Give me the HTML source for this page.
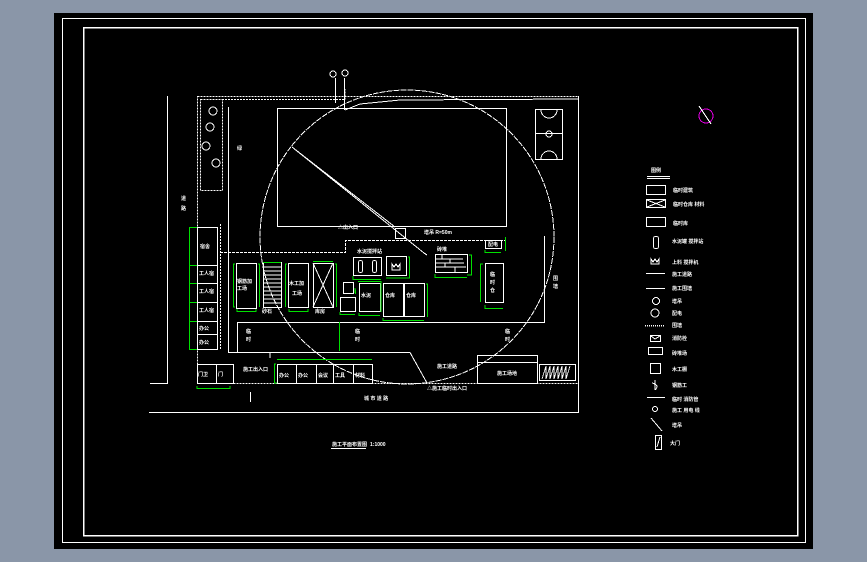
<!DOCTYPE html>
<html><head><meta charset="utf-8"><style>
html,body{margin:0;padding:0;background:#8a96a8;width:867px;height:562px;overflow:hidden}
svg{display:block}
text{font-family:"Liberation Sans","Noto Sans CJK SC",sans-serif;fill:#fff;font-size:5px;font-weight:bold}
</style></head><body>
<svg width="867" height="562" viewBox="0 0 867 562" xmlns="http://www.w3.org/2000/svg" shape-rendering="crispEdges">
<rect x="0" y="0" width="867" height="562" fill="#8a96a8"/>
<rect x="54" y="13" width="759" height="536" fill="#000"/>
<g fill="none" stroke="#fff" stroke-width="1">
<rect x="62.5" y="18.5" width="743" height="524"/>
<rect x="83.5" y="27.5" width="714" height="508" stroke-width="1.5"/>
<polyline points="167.5,96 167.5,383.5 150,383.5"/>
<line x1="149" y1="412.5" x2="579" y2="412.5" stroke-width="1.3"/>
<rect x="197.5" y="96.5" width="381" height="287" stroke-dasharray="2,1"/>
<rect x="200.5" y="99.5" width="22" height="91" stroke-dasharray="2,1"/>
<polyline points="222,99.5 345,99.5 345,89" stroke-dasharray="2,1"/>
<line x1="335.5" y1="78" x2="335.5" y2="103"/>
<line x1="344.5" y1="78" x2="344.5" y2="110"/>
<circle cx="333" cy="74" r="3"/><circle cx="345" cy="73" r="3"/>
<polyline points="345,110 360,104 400,100 578,99"/>
<polyline points="228.5,107 228.5,352.5 410,352.5 427,383"/>
<polyline points="237.5,352 237.5,322.5 544.5,322.5 544.5,236"/>
<polyline points="220,252.5 345.5,252.5 345.5,240.5 505,240.5" stroke-dasharray="3,1"/>
<line x1="220.5" y1="224" x2="220.5" y2="350" stroke-dasharray="2,1"/>
<circle cx="407" cy="237" r="147" stroke-dasharray="6,1"/>
<rect x="277.5" y="108.5" width="229" height="118"/>
<polyline points="292,147 424,253 427,255"/>
<polyline points="292,147 395,227"/>
<rect x="395.5" y="228.5" width="10" height="10"/>
<rect x="535.5" y="109.5" width="27" height="50"/>
<line x1="535" y1="133.5" x2="562" y2="133.5"/><circle cx="549" cy="134" r="3"/>
<path d="M541,110 A8,8 0 0 0 557,110 M541,159 A8,8 0 0 1 557,159"/>
<circle cx="213" cy="111" r="4"/><circle cx="210" cy="127" r="4"/><circle cx="206" cy="146" r="4"/><circle cx="216" cy="163" r="4"/>
<rect x="197.5" y="227.5" width="20" height="122"/>
<line x1="197" y1="265.5" x2="217" y2="265.5"/><line x1="197" y1="283.5" x2="217" y2="283.5"/><line x1="197" y1="302.5" x2="217" y2="302.5"/><line x1="197" y1="321.5" x2="217" y2="321.5"/><line x1="197" y1="334.5" x2="217" y2="334.5"/>
<rect x="197.5" y="364.5" width="36" height="19"/><line x1="216.5" y1="364" x2="216.5" y2="383"/>
<rect x="236.5" y="263.5" width="20" height="45"/>
<rect x="263.5" y="262.5" width="18" height="45"/>
<g stroke-width="0.8"><line x1="263" y1="267" x2="281" y2="267"/><line x1="263" y1="271" x2="281" y2="271"/><line x1="263" y1="275" x2="281" y2="275"/><line x1="263" y1="279" x2="281" y2="279"/><line x1="263" y1="283" x2="281" y2="283"/><line x1="263" y1="287" x2="281" y2="287"/><line x1="263" y1="291" x2="281" y2="291"/><line x1="263" y1="295" x2="281" y2="295"/><line x1="263" y1="299" x2="281" y2="299"/><line x1="263" y1="303" x2="281" y2="303"/></g>
<rect x="288.5" y="263.5" width="20" height="44"/>
<rect x="313.5" y="263.5" width="20" height="44"/><path d="M313,263 L333,307 M333,263 L313,307"/>
<rect x="343.5" y="282.5" width="10" height="11"/><rect x="340.5" y="297.5" width="15" height="14"/>
<rect x="359.5" y="283.5" width="21" height="28"/>
<rect x="383.5" y="283.5" width="20" height="33"/><rect x="404.5" y="283.5" width="20" height="33"/>
<rect x="353.5" y="257.5" width="28" height="18"/><rect x="358.5" y="260.5" width="4" height="12" rx="2"/><rect x="372.5" y="260.5" width="4" height="12" rx="2"/>
<rect x="386.5" y="256.5" width="20" height="19"/><path d="M392,270 L392,264 394,267 396,264 398,267 400,264 400,270 Z"/>
<rect x="435.5" y="254.5" width="32" height="18"/>
<g stroke-width="0.7"><line x1="435" y1="259" x2="463" y2="259"/><line x1="435" y1="263" x2="464" y2="263"/><line x1="435" y1="267" x2="466" y2="267"/><line x1="442" y1="254" x2="442" y2="259"/><line x1="450" y1="259" x2="450" y2="263"/><line x1="445" y1="263" x2="445" y2="267"/><line x1="455" y1="267" x2="455" y2="272"/></g>
<rect x="485.5" y="240.5" width="16" height="8"/>
<rect x="485.5" y="263.5" width="18" height="39"/>
<rect x="277.5" y="364.5" width="95" height="19"/>
<line x1="296.5" y1="364" x2="296.5" y2="383"/><line x1="316.5" y1="364" x2="316.5" y2="383"/><line x1="333.5" y1="364" x2="333.5" y2="383"/><line x1="353.5" y1="364" x2="353.5" y2="383"/>
<line x1="270" y1="352" x2="270" y2="358"/>
<line x1="250.5" y1="392" x2="250.5" y2="402"/>
<rect x="477.5" y="355.5" width="60" height="28"/><line x1="477" y1="362.5" x2="537" y2="362.5"/>
<rect x="539.5" y="364.5" width="36" height="16"/>
<path d="M542,379 L546,366 546,379 550,366 550,379 554,366 554,379 558,366 558,379 562,366 562,379 566,366 566,379 570,366" stroke-width="0.8"/>
<line x1="578.5" y1="96" x2="578.5" y2="412"/>
<line x1="647" y1="176.5" x2="670" y2="176.5"/><line x1="647" y1="178.5" x2="670" y2="178.5"/>
<rect x="646.5" y="185.5" width="19" height="9"/>
<rect x="646.5" y="199.5" width="19" height="8"/><path d="M647,200 L665,207 M665,200 L647,207"/>
<rect x="646.5" y="217.5" width="19" height="9"/>
<rect x="653.5" y="236.5" width="5" height="12" rx="2"/>
<path d="M651,264 L651,259 653,262 655,259 657,262 659,259 659,264 Z"/>
<line x1="646" y1="273.5" x2="665" y2="273.5"/>
<line x1="646" y1="288.5" x2="665" y2="288.5"/>
<circle cx="656" cy="301" r="3.5"/>
<circle cx="655" cy="313" r="4"/>
<line x1="645" y1="325.5" x2="664" y2="325.5" stroke-dasharray="1,1" stroke-width="1.5"/>
<rect x="650.5" y="335.5" width="10" height="6"/><path d="M651,336 L655,339 660,336"/>
<rect x="648.5" y="347.5" width="14" height="7"/>
<rect x="650.5" y="363.5" width="10" height="10"/>
<path d="M655,380 L655,390 M652,383 Q660,385 655,390"/>
<line x1="647" y1="397.5" x2="665" y2="397.5"/>
<circle cx="655" cy="409" r="2.5"/>
<line x1="651" y1="418" x2="662" y2="431"/>
<rect x="655.5" y="435.5" width="6" height="14"/><line x1="657" y1="447" x2="660" y2="437"/>
<line x1="331" y1="448.5" x2="366" y2="448.5"/>
</g>
<g fill="none" stroke="#00e000" stroke-width="1.3">
<line x1="189.5" y1="227" x2="189.5" y2="349"/><line x1="189" y1="227.5" x2="197" y2="227.5"/>
<line x1="189" y1="265.5" x2="197" y2="265.5"/><line x1="189" y1="283.5" x2="197" y2="283.5"/><line x1="189" y1="302.5" x2="197" y2="302.5"/><line x1="189" y1="321.5" x2="197" y2="321.5"/><line x1="189" y1="349.5" x2="197" y2="349.5"/>
<polyline points="197,386 197,388.5 230,388.5 230,386"/>
<polyline points="235,264 233.5,264 233.5,307 235,307"/><polyline points="258,264 259.5,264 259.5,307"/>
<polyline points="237,309 237,311.5 256,311.5 256,309"/>
<line x1="263" y1="262.5" x2="281" y2="262.5"/>
<polyline points="287,264 285.5,264 285.5,307"/><polyline points="289,309 289,311.5 308,311.5 308,309"/>
<line x1="313" y1="261.5" x2="333" y2="261.5"/><polyline points="335,264 336.5,264 336.5,307"/>
<polyline points="353,276 353,279.5 381,279.5"/><polyline points="408,257 409.5,257 409.5,278 386,278"/>
<polyline points="355,288 355.5,294"/><polyline points="340,312 340,314.5 355,314.5"/>
<polyline points="359,313 359,315.5 380,315.5"/><polyline points="358,281.5 381,281.5 381,312"/>
<polyline points="383,318 383,320.5 424,320.5"/><polyline points="426,284 427.5,284 427.5,317"/>
<polyline points="435,274 435,277.5 467,277.5"/><polyline points="469,255 471.5,255 471.5,275 467,275"/>
<polyline points="485,250 485,252.5 501,252.5"/><line x1="505.5" y1="237" x2="505.5" y2="251"/>
<polyline points="483,264 480.5,264 480.5,302"/><polyline points="485,305 485,308.5 503,308.5"/>
<line x1="339.5" y1="322" x2="339.5" y2="351"/>
<polyline points="276,364 274.5,364 274.5,383 277,383"/><line x1="277" y1="359.5" x2="372" y2="359.5"/>
</g>
<circle cx="706" cy="116" r="7" fill="none" stroke="#e000e0" stroke-width="1"/>
<line x1="699" y1="106" x2="711" y2="124" stroke="#fff" stroke-width="1"/>
<g>
<text x="200" y="248">宿舍</text><text x="199" y="275">工人宿</text><text x="199" y="293">工人宿</text><text x="199" y="312">工人宿</text><text x="199" y="330">办公</text><text x="199" y="344">办公</text>
<text x="198" y="376">门卫</text><text x="218" y="376">门</text>
<text x="237" y="283">钢筋加</text><text x="237" y="290">工场</text>
<text x="289" y="285">木工加</text><text x="292" y="295">工场</text>
<text x="262" y="313">砂石</text><text x="315" y="313">库房</text>
<text x="361" y="297">水泥</text><text x="385" y="297">仓库</text><text x="406" y="297">仓库</text>
<text x="357" y="253">水泥搅拌站</text><text x="437" y="251">砖堆</text><text x="488" y="246">配电</text>
<text x="490" y="276" font-size="6">临</text><text x="490" y="284" font-size="6">时</text><text x="490" y="292" font-size="6">仓</text>
<text x="246" y="333" font-size="6">临</text><text x="246" y="341" font-size="6">时</text><text x="355" y="333" font-size="6">临</text><text x="355" y="341" font-size="6">时</text><text x="505" y="333" font-size="6">临</text><text x="505" y="341" font-size="6">时</text>
<text x="553" y="280" font-size="6">围</text><text x="553" y="288" font-size="6">墙</text>
<text x="181" y="200">道</text><text x="181" y="210">路</text>
<text x="237" y="150">绿</text>
<text x="279" y="377">办公</text><text x="298" y="377">办公</text><text x="318" y="377">会议</text><text x="335" y="377">工具</text><text x="355" y="377">材料</text>
<text x="243" y="371">施工出入口</text><text x="437" y="368">施工道路</text><text x="497" y="375">施工场地</text>
<text x="427" y="390">△施工临时出入口</text><text x="338" y="229">△出入口</text><text x="424" y="234">塔吊 R=50m</text>
<text x="364" y="400">城 市 道 路</text>
<text x="332" y="446">施工平面布置图</text><text x="370" y="446">1:1000</text>
<text x="651" y="172">图例</text>
<text x="673" y="192">临时建筑</text><text x="673" y="206">临时仓库 材料</text><text x="673" y="225">临时库</text><text x="672" y="243">水泥罐 搅拌站</text><text x="672" y="264">上料 搅拌机</text>
<text x="672" y="276">施工道路</text><text x="672" y="290">施工围墙</text><text x="672" y="303">塔吊</text><text x="672" y="315">配电</text><text x="672" y="327">围墙</text><text x="672" y="340">消防栓</text>
<text x="672" y="355">砖堆场</text><text x="672" y="371">木工棚</text><text x="672" y="387">钢筋工</text><text x="672" y="401">临时 消防管</text><text x="672" y="412">施工 用电 线</text>
<text x="672" y="427">塔吊</text><text x="670" y="445">大门</text>
</g>
</svg>
</body></html>
